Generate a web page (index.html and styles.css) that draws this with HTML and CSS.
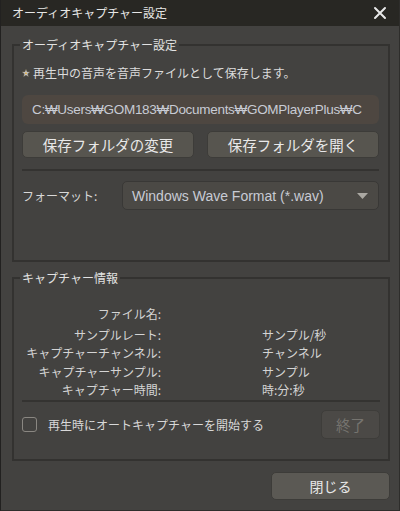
FILE: index.html
```html
<!DOCTYPE html>
<html lang="ja">
<head>
<meta charset="utf-8">
<link rel="stylesheet" href="styles.css">
</head>
<body>
<div class="window">
  <div class="titlebar">
    <span class="title">オーディオキャプチャー設定</span>
    <svg class="close" width="14" height="14" viewBox="0 0 14 14"><path d="M2 2 L12 12 M12 2 L2 12" stroke="#e8e8e8" stroke-width="2" stroke-linecap="round"/></svg>
  </div>
  <div class="main">
    <fieldset class="group group-settings">
      <legend>オーディオキャプチャー設定</legend>
      <div class="note">
        <svg class="star" width="8" height="8" viewBox="0 0 10 10"><polygon points="5,0.5 6.3,3.7 9.6,3.8 7,5.9 7.9,9.3 5,7.4 2.1,9.3 3,5.9 0.4,3.8 3.7,3.7" fill="#c9d3e8" stroke="#8a7a55" stroke-width="0.6"/><circle cx="5" cy="5.4" r="1.4" fill="#e0b050"/></svg>
        <span>再生中の音声を音声ファイルとして保存します。</span>
      </div>
      <div class="path">C:₩Users₩GOM183₩Documents₩GOMPlayerPlus₩C</div>
      <div class="btn-row">
        <div class="btn">保存フォルダの変更</div>
        <div class="btn">保存フォルダを開く</div>
      </div>
      <div class="sep"></div>
      <div class="format-row">
        <span class="format-label">フォーマット:</span>
        <div class="select">
          <span>Windows Wave Format (*.wav)</span>
          <svg width="11" height="6" viewBox="0 0 11 6"><polygon points="0,0 11,0 5.5,6" fill="#aaa8a2"/></svg>
        </div>
      </div>
    </fieldset>
    <fieldset class="group group-info">
      <legend>キャプチャー情報</legend>
      <div class="info">
        <span class="lab first">ファイル名:</span><span class="val first"></span>
        <span class="lab">サンプルレート:</span><span class="val">サンプル/秒</span>
        <span class="lab">キャプチャーチャンネル:</span><span class="val">チャンネル</span>
        <span class="lab">キャプチャーサンプル:</span><span class="val">サンプル</span>
        <span class="lab">キャプチャー時間:</span><span class="val">時:分:秒</span>
      </div>
      <div class="sep sep2"></div>
      <div class="auto-row">
        <span class="check"></span>
        <span class="auto-label">再生時にオートキャプチャーを開始する</span>
        <div class="btn btn-stop">終了</div>
      </div>
    </fieldset>
    <div class="footer">
      <div class="btn btn-close">閉じる</div>
    </div>
  </div>
</div>
</body>
</html>
```
FILE: styles.css
```css
html, body {
  margin: 0;
  padding: 0;
}
body {
  width: 400px;
  height: 511px;
  overflow: hidden;
  background: #434240;
  font-family: "Noto Sans CJK JP", "Noto Sans", sans-serif;
  color: #dcdcdc;
}
.window {
  width: 400px;
  height: 511px;
  box-sizing: border-box;
  border-left: 1px solid #222120;
  border-right: 1px solid #2e2d2b;
  border-bottom: 1px solid #2e2d2b;
}
.titlebar {
  height: 26px;
  background: #282723;
  display: flex;
  align-items: center;
  justify-content: space-between;
  padding: 0 12px 0 11px;
  font-size: 12px;
  color: #e6e6e6;
}
.title {
  line-height: 14px;
}
.main {
  padding: 12px 9px 0 11px;
}
.group {
  margin: 0;
  border: 2px solid #333230;
  min-width: 0;
}
.group legend {
  font-size: 12px;
  line-height: 14px;
  padding: 0 2px;
  margin-left: -2px;
  color: #e2e2e2;
}
.group-settings {
  padding: 14px 9px 50px 8px;
}
.note {
  display: flex;
  align-items: center;
  font-size: 12px;
  line-height: 14px;
  gap: 3px;
}
.path {
  margin-top: 15px;
  height: 29px;
  box-sizing: border-box;
  background: #4e4741;
  border-radius: 6px;
  padding: 0 8px 0 10px;
  display: flex;
  align-items: center;
  font-family: "Liberation Sans", "DejaVu Sans", sans-serif;
  font-size: 13.5px;
  letter-spacing: -0.3px;
  color: #c8cbd4;
  white-space: nowrap;
  overflow: hidden;
}
.btn-row {
  margin-top: 7px;
  display: flex;
  gap: 13px;
}
.btn {
  height: 27px;
  box-sizing: border-box;
  background: #57554f;
  border: 1px solid #3d3c39;
  border-radius: 5px;
  display: flex;
  align-items: center;
  justify-content: center;
  font-size: 14.5px;
  color: #e8e8e8;
}
.btn-row .btn {
  flex: 1;
}
.sep {
  margin-top: 11px;
  height: 2px;
  background: #343331;
}
.format-row {
  margin-top: 10px;
  display: flex;
  align-items: center;
}
.format-label {
  width: 100px;
  font-size: 12px;
  line-height: 14px;
  color: #d8d8d8;
}
.select {
  flex: 1;
  height: 29px;
  box-sizing: border-box;
  background: #4b4945;
  border: 1px solid #393836;
  border-radius: 5px;
  display: flex;
  align-items: center;
  justify-content: space-between;
  padding: 0 10px 0 9px;
  font-family: "Liberation Sans", "DejaVu Sans", sans-serif;
  font-size: 14px;
  color: #c8cbd4;
}
.group-info {
  margin-top: 9px;
  padding: 22px 8px 20px 8px;
}
.info {
  display: grid;
  grid-template-columns: 139px 1fr;
  column-gap: 101px;
  row-gap: 4.5px;
  font-size: 12px;
  line-height: 14px;
  color: #d4d4d4;
}
.lab {
  text-align: right;
}
.first {
  margin-bottom: 2px;
}
.sep2 {
  margin-top: 3px;
}
.auto-row {
  margin-top: 8px;
  display: flex;
  align-items: center;
}
.check {
  width: 15px;
  height: 15px;
  box-sizing: border-box;
  border: 1px solid #8a8782;
  border-radius: 3px;
  margin-right: 11px;
}
.auto-label {
  flex: 1;
  font-size: 12px;
  line-height: 14px;
  color: #d8d8d8;
}
.btn-stop {
  width: 59px;
  height: 29px;
  background: #4b4946;
  border-color: #3e3d3a;
  color: #76746f;
}
.footer {
  display: flex;
  justify-content: flex-end;
  margin-top: 11px;
}
.btn-close {
  width: 119px;
  height: 28px;
  background: #5b5954;
  font-size: 14px;
}
```
